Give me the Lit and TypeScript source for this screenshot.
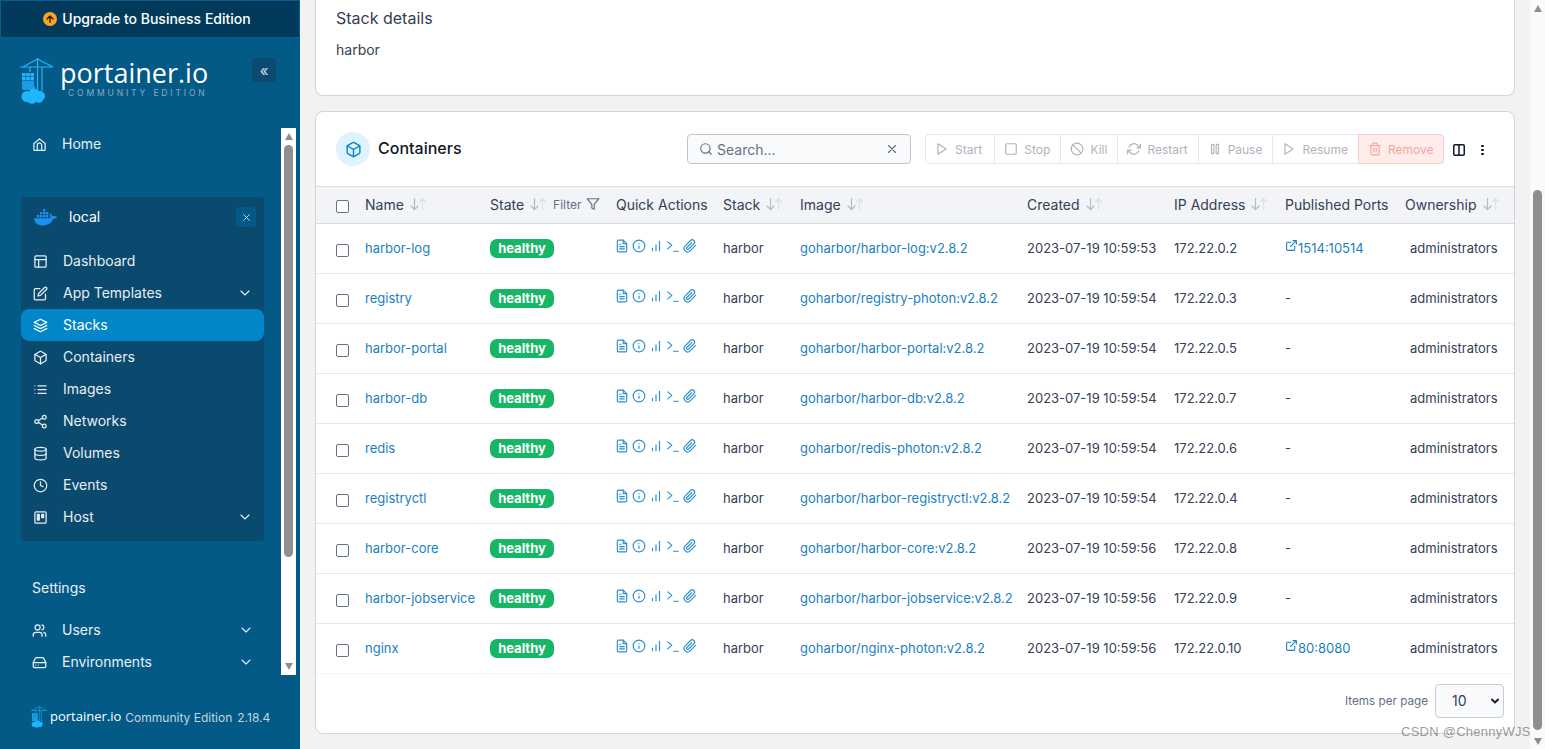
import { LitElement, html, css, svg } from "lit";
import { customElement } from "lit/decorators.js";

const ic = (body: unknown, size = 16, cls = "") => html`<svg class=${cls} width=${size} height=${size} viewBox="0 0 24 24" fill="none" stroke="currentColor" stroke-width="2" stroke-linecap="round" stroke-linejoin="round">${body}</svg>`;

const I = {
  home: svg`<path d="M3 10.500 12 3l9 7.500V20a1.500 1.500 0 0 1-1.500 1.500h-15A1.500 1.500 0 0 1 3 20z"/><path d="M8.500 21.500V13a3.500 3.500 0 0 1 7 0v8.500"/>`,
  layout: svg`<rect x="3" y="3" width="18" height="18" rx="2"/><path d="M3 9h18M9 21V9"/>`,
  edit: svg`<path d="M11 4H4a2 2 0 0 0-2 2v14a2 2 0 0 0 2 2h14a2 2 0 0 0 2-2v-7"/><path d="M18.500 2.500a2.120 2.120 0 0 1 3 3L12 15l-4 1 1-4z"/>`,
  layers: svg`<path d="M12 2 2 7l10 5 10-5z"/><path d="m2 17 10 5 10-5M2 12l10 5 10-5"/>`,
  box: svg`<path d="M21 16V8a2 2 0 0 0-1-1.730l-7-4a2 2 0 0 0-2 0l-7 4A2 2 0 0 0 3 8v8a2 2 0 0 0 1 1.730l7 4a2 2 0 0 0 2 0l7-4A2 2 0 0 0 21 16z"/><path d="M3.300 7 12 12l8.700-5M12 22V12"/>`,
  list: svg`<path d="M8 6h13M8 12h13M8 18h13M3 6h.01M3 12h.01M3 18h.01"/>`,
  share: svg`<circle cx="18" cy="5" r="3"/><circle cx="6" cy="12" r="3"/><circle cx="18" cy="19" r="3"/><path d="m8.600 13.500 6.800 4M15.400 6.500l-6.800 4"/>`,
  db: svg`<ellipse cx="12" cy="5" rx="9" ry="3"/><path d="M21 12c0 1.660-4 3-9 3s-9-1.340-9-3"/><path d="M3 5v14c0 1.660 4 3 9 3s9-1.340 9-3V5"/>`,
  clock: svg`<circle cx="12" cy="12" r="10"/><path d="M12 6v6l4 2"/>`,
  host: svg`<rect x="3" y="3" width="18" height="18" rx="2"/><path d="M7 7h3v9H7zM14 7h3v5h-3z" fill="currentColor"/>`,
  users: svg`<path d="M16 21v-2a4 4 0 0 0-4-4H6a4 4 0 0 0-4 4v2"/><circle cx="9" cy="7" r="4"/><path d="M22 21v-2a4 4 0 0 0-3-3.870M16 3.130a4 4 0 0 1 0 7.750"/>`,
  drive: svg`<path d="M22 12H2"/><path d="M5.450 5.110 2 12v6a2 2 0 0 0 2 2h16a2 2 0 0 0 2-2v-6l-3.450-6.890A2 2 0 0 0 16.760 4H7.240a2 2 0 0 0-1.790 1.110z"/><path d="M6 16h.01M10 16h.01"/>`,
  chev: svg`<path d="m6 9 6 6 6-6"/>`,
  x: svg`<path d="M18 6 6 18M6 6l12 12"/>`,
  search: svg`<circle cx="11" cy="11" r="8"/><path d="m21 21-4.350-4.350"/>`,
  play: svg`<path d="m5 3 14 9-14 9z"/>`,
  square: svg`<rect x="3" y="3" width="18" height="18" rx="2"/>`,
  slash: svg`<circle cx="12" cy="12" r="10"/><path d="m4.900 4.900 14.200 14.200"/>`,
  refresh: svg`<path d="M23 4v6h-6M1 20v-6h6"/><path d="M3.500 9a9 9 0 0 1 14.900-3.400L23 10M1 14l4.600 4.400A9 9 0 0 0 20.500 15"/>`,
  pause: svg`<rect x="6" y="4" width="4" height="16" rx="1"/><rect x="14" y="4" width="4" height="16" rx="1"/>`,
  trash: svg`<path d="M3 6h18M19 6v14a2 2 0 0 1-2 2H7a2 2 0 0 1-2-2V6M8 6V4a2 2 0 0 1 2-2h4a2 2 0 0 1 2 2v2M10 11v6M14 11v6"/>`,
  columns: svg`<rect x="3" y="3" width="18" height="18" rx="2"/><path d="M12 3v18"/>`,
  file: svg`<path d="M14 2H6a2 2 0 0 0-2 2v16a2 2 0 0 0 2 2h12a2 2 0 0 0 2-2V8z"/><path d="M14 2v6h6"/><path d="M8 13h8M8 17h8M8 9h2"/>`,
  info: svg`<circle cx="12" cy="12" r="10"/><path d="M12 16v-4M12 8h.01"/>`,
  bars: svg`<path d="M18 20V4M12 20V10M6 20v-4"/>`,
  term: svg`<path d="m3 5 7 6-7 6M13 21h8"/>`,
  clip: svg`<path d="m21.440 11.050-9.190 9.190a6 6 0 0 1-8.490-8.490l9.190-9.190a4 4 0 0 1 5.660 5.660l-9.200 9.190a2 2 0 0 1-2.830-2.830l8.490-8.480"/>`,
  ext: svg`<path d="M18 13v6a2 2 0 0 1-2 2H5a2 2 0 0 1-2-2V8a2 2 0 0 1 2-2h6M15 3h6v6M10 14 21 3"/>`,
  filter: svg`<path d="M22 3H2l8 9.460V19l4 2v-8.540z"/>`,
};

const logo = (w: number, h: number) => html`<svg width=${w} height=${h} viewBox="0 0 34 46" fill="none">
  <g stroke="#1FB6FF" stroke-width="1.200">
    <path d="M0 9h33M17.500 1 3 9M17.500 1 33 9M17.500 0v32M22 9v24M10 9v5"/>
  </g>
  <g fill="#1FB6FF">
    <rect x="2" y="15" width="3.600" height="3.400"/><rect x="6.200" y="15" width="3.600" height="3.400"/><rect x="10.400" y="15" width="3.600" height="3.400"/>
    <rect x="2" y="19" width="3.600" height="3.400"/><rect x="6.200" y="19" width="3.600" height="3.400"/><rect x="10.400" y="19" width="3.600" height="3.400"/>
    <rect x="2" y="23" width="12" height="4.500" opacity=".75"/>
    <rect x="2" y="27" width="13" height="5" rx="2" opacity=".75"/>
    <circle cx="7" cy="38.500" r="5.500"/><circle cx="14" cy="36" r="5.500"/><circle cx="20" cy="38" r="5"/><circle cx="12" cy="41" r="4.800"/><circle cx="19" cy="41" r="3.800"/>
  </g>
</svg>`;

const whale = html`<svg width="24" height="17" viewBox="0 0 24 17"><g fill="#1c90ed">
  <rect x="3" y="6" width="2.400" height="2.400"/><rect x="6" y="6" width="2.400" height="2.400"/><rect x="9" y="6" width="2.400" height="2.400"/><rect x="12" y="6" width="2.400" height="2.400"/><rect x="6" y="3" width="2.400" height="2.400"/><rect x="9" y="3" width="2.400" height="2.400"/><rect x="12" y="3" width="2.400" height="2.400"/><rect x="9" y="0" width="2.400" height="2.400"/>
  <path d="M0 9.200h16.200c.4-1.600 0-3-.8-4l1-.8c1 .7 1.700 1.700 1.900 2.900 1.300-.5 3-.5 4.700.4-.7 1.500-2.200 2.200-3.700 2.100C17.300 14.500 13.800 16.500 8.800 16.500 3.500 16.500.5 13.700 0 9.200z"/>
</g></svg>`;

type NavItem = { icon: unknown; label: string; chev?: boolean; active?: boolean };
const envItems: NavItem[] = [
  { icon: I.layout, label: "Dashboard" },
  { icon: I.edit, label: "App Templates", chev: true },
  { icon: I.layers, label: "Stacks", active: true },
  { icon: I.box, label: "Containers" },
  { icon: I.list, label: "Images" },
  { icon: I.share, label: "Networks" },
  { icon: I.db, label: "Volumes" },
  { icon: I.clock, label: "Events" },
  { icon: I.host, label: "Host", chev: true },
];

const rows = [
  ["harbor-log", "goharbor/harbor-log:v2.8.2", "2023-07-19 10:59:53", "172.22.0.2", "1514:10514"],
  ["registry", "goharbor/registry-photon:v2.8.2", "2023-07-19 10:59:54", "172.22.0.3", ""],
  ["harbor-portal", "goharbor/harbor-portal:v2.8.2", "2023-07-19 10:59:54", "172.22.0.5", ""],
  ["harbor-db", "goharbor/harbor-db:v2.8.2", "2023-07-19 10:59:54", "172.22.0.7", ""],
  ["redis", "goharbor/redis-photon:v2.8.2", "2023-07-19 10:59:54", "172.22.0.6", ""],
  ["registryctl", "goharbor/harbor-registryctl:v2.8.2", "2023-07-19 10:59:54", "172.22.0.4", ""],
  ["harbor-core", "goharbor/harbor-core:v2.8.2", "2023-07-19 10:59:56", "172.22.0.8", ""],
  ["harbor-jobservice", "goharbor/harbor-jobservice:v2.8.2", "2023-07-19 10:59:56", "172.22.0.9", ""],
  ["nginx", "goharbor/nginx-photon:v2.8.2", "2023-07-19 10:59:56", "172.22.0.10", "80:8080"],
];

const actions: [unknown, string][] = [
  [I.play, "Start"], [I.square, "Stop"], [I.slash, "Kill"], [I.refresh, "Restart"], [I.pause, "Pause"], [I.play, "Resume"],
];

const sort = html`<span class="sort"><svg width="20" height="14" viewBox="0 0 20 14" fill="none" stroke="currentColor" stroke-width="1.200" stroke-linecap="round" stroke-linejoin="round"><path d="M5.500 1.500v11M2 9l3.500 3.500L9 9"/><path d="M13.500 12.500v-11M10.500 5l3-3.500 3 3.500" stroke="#dde0e5"/></svg></span>`;

@customElement("app-root")
export class AppRoot extends LitElement {
  static styles = css`
    :host { display: block; height: 749px; width: 1545px; overflow: hidden; font-family: Inter, "Noto Sans", sans-serif; font-size: 14px; color: #344054; }
    * { box-sizing: border-box; }
    svg { display: block; flex: none; }
    .page { display: flex; height: 749px; position: relative; background: #f2f2f2; }

    .side { width: 300px; flex: none; background: #045a87; color: #f2f4f7; display: flex; flex-direction: column; }
    .upgrade { height: 38px; background: #023a5b; border: 1px solid #0a5f90; display: flex; align-items: center; justify-content: center; gap: 5px; color: #fff; font-weight: 500; font-size: 14px; padding: 0 6px 1px 0; }
    .upgrade .dot { width: 14px; height: 14px; border-radius: 50%; background: #f8a520; color: #2b1d05; display: flex; align-items: center; justify-content: center; }
    .brand { height: 90px; display: flex; padding: 20px 24px 0 20px; justify-content: space-between; align-items: flex-start; }
    .brand-l { display: flex; gap: 6px; }
    .brand-t { display: flex; flex-direction: column; padding-top: 3px; }
    .wordmark { font-family: "Open Sans", Inter, sans-serif; font-size: 27px; line-height: 24px; color: #fff; font-weight: 500; }
    .comm { font-size: 8.500px; line-height: 10px; letter-spacing: 2.850px; color: #8da9bc; padding-left: 8px; margin-top: 3px; }
    .collapse { width: 24px; height: 24px; border-radius: 4px; background: #0b4b70; color: #cfe0ea; display: flex; align-items: center; justify-content: center; font-size: 15px; }
    .mid { display: flex; height: 547px; }
    .nav { width: 281px; flex: none; }
    .item { display: flex; align-items: center; height: 32px; color: #eaf0f4; }
    .lbl { padding-bottom: 2px; }
    .top { padding-left: 32px; }
    .top .lbl { margin-left: 15px; }
    .group { margin: 37px 17px 0 21px; background: #0a4a6e; border-radius: 4px; padding-bottom: 8px; }
    .ghead { height: 40px; display: flex; align-items: center; padding: 0 8px 0 13px; color: #fff; }
    .ghead .lbl { margin-left: 11px; flex: 1; }
    .gx { width: 20px; height: 20px; border-radius: 3px; background: #045a87; display: flex; align-items: center; justify-content: center; color: #dbe6ee; }
    .gitems { padding-top: 8px; }
    .gitem { padding: 0 11px 0 12px; height: 32px; display: flex; align-items: center; border-radius: 8px; color: #e8eef3; }
    .gitem .lbl { margin-left: 15px; flex: 1; }
    .gitem.on { background: #0086c9; color: #fff; }
    .chev { stroke-width: 1.600; }
    .settings { padding: 38px 0 0 32px; line-height: 17px; color: #eaf0f4; }
    .sitems { padding: 18px 27px 0 32px; }
    .sitems .item .lbl { margin-left: 15px; flex: 1; }
    .sbar { width: 15px; flex: none; background: #fff; display: flex; flex-direction: column; align-items: center; padding: 5px 0; }
    .thumb { width: 9px; background: #8f8f8f; border-radius: 5px; display: block; }
    .tri-u { width: 0; height: 0; border: 4.500px solid transparent; border-top: 0; border-bottom: 7px solid #8f8f8f; display: block; }
    .tri-d { width: 0; height: 0; border: 4.500px solid transparent; border-bottom: 0; border-top: 7px solid #8f8f8f; display: block; }
    .foot { display: flex; align-items: center; padding: 31px 0 0 31px; }
    .foot .wm { font-family: "Open Sans", Inter, sans-serif; font-size: 13px; color: #fff; font-weight: 500; margin-left: 3px; padding-bottom: 2px; }
    .foot .ed { font-size: 12px; color: #c5d5df; margin-left: 4px; }
    .foot .ver { font-size: 12px; color: #c5d5df; margin-left: 5px; }

    .main { flex: 1; min-width: 0; padding: 0 15px; display: flex; flex-direction: column; gap: 15px; }
    .card { background: #fff; border: 1px solid #d0d5dd; border-radius: 8px; }
    .details { height: 97px; flex: none; margin-top: -1px; border-top: 0; border-top-left-radius: 0; border-top-right-radius: 0; padding: 10px 20px; }
    .details h3 { margin: 0 0 13px; font-size: 16px; font-weight: 400; line-height: 19px; color: #344054; }
    .details p { margin: 0; line-height: 17px; color: #344054; }
    .cont { height: 623px; flex: none; display: flex; flex-direction: column; }
    .tools { height: 74px; flex: none; display: flex; align-items: center; padding: 0 20px; }
    .t-ic { width: 34px; height: 34px; border-radius: 50%; background: #e0f2fe; color: #0086c9; display: flex; align-items: center; justify-content: center; }
    .t-title { font-size: 16px; font-weight: 500; color: #101828; margin-left: 8px; width: 309px; line-height: 20px; margin-top: -3px; }
    .search { width: 224px; height: 30px; border: 1px solid #bfc4cc; border-radius: 4px; background: #f9fafb; display: flex; align-items: center; padding: 0 11px; color: #667085; }
    .search span { flex: 1; margin-left: 4px; }
    .btns { display: flex; margin-left: 14px; height: 30px; border: 1px solid #e4e7ec; border-radius: 4px; }
    .btn { display: flex; align-items: center; gap: 6px; padding: 0 10px 0 9px; font-size: 12px; color: #aeb4bd; border-right: 1px solid #e4e7ec; }
    .btn:first-child { padding-right: 12.300px; }
    .btn svg { color: #aeb4bd; }
    .btn:last-child { border-right: 0; }
    .btn.danger { background: #feeceb; color: #f2a6a0; border: 1px solid #fbcfcb; margin: -1px; border-radius: 0 4px 4px 0; }
    .btn.danger svg { color: #f2a6a0; }
    .t-end { display: flex; align-items: center; margin: 2px 0 0 8px; color: #101828; gap: 15px; }
    .cols { stroke-width: 2.600; }
    .dots { display: flex; flex-direction: column; gap: 1.500px; width: 3px; }
    .dots i { width: 2.500px; height: 2.500px; border-radius: 50%; background: #101828; display: block; }

    table { border-collapse: collapse; table-layout: fixed; width: 100%; }
    th { height: 37px; background: #f2f4f7; font-weight: 400; text-align: left; padding: 0 0 2px; border-top: 1px solid #d8dbe0; border-bottom: 1px solid #d8dbe0; color: #344054; white-space: nowrap; font-size: 14px; }
    th:first-child { padding: 3px 0 0; }
    td { height: 50px; padding: 0 0 2px; border-bottom: 1px solid #e4e7ec; white-space: nowrap; font-size: 13px; color: #344054; }
    td:first-child { padding: 4px 0 0; }
    tr:last-child td { border-bottom: 1px solid #f2f4f7; }
    td.own { padding-left: 5px; }
    .cbx { appearance: none; display: block; width: 13px; height: 13px; border: 1px solid #667085; border-radius: 2px; margin: 0 0 0 20px; background: #fff; }
    .th-in { display: flex; align-items: center; gap: 5px; }
    .sort { color: #b5bac3; }
    .filter { display: flex; align-items: center; gap: 4px; font-size: 12px; color: #667085; margin-left: -1px; }
    a { color: #1a7fc1; text-decoration: none; }
    .badge { display: block; width: 64px; margin-top: 2px; text-align: center; background: #17b566; color: #fff; font-weight: 700; font-size: 13px; line-height: 18px; height: 19px; border-radius: 7px; }
    .qa { display: flex; align-items: center; gap: 3px; color: #2b8fd0; margin: -3px 0 0 -1px; }
    .port { display: inline-flex; align-items: center; color: #1a7fc1; }
    .port svg { margin-top: -4px; }
    .tfoot { flex: 1; display: flex; align-items: center; justify-content: flex-end; padding: 0 10px 6px 0; font-size: 11.700px; color: #667085; gap: 7px; }
    .sel { width: 69px; height: 34px; border: 1px solid #c9ced6; border-radius: 4px; background: #f9fafb; display: flex; align-items: center; justify-content: space-between; font-size: 14px; padding: 0 2px 0 16px; color: #344054; }
    .selc { stroke-width: 4; color: #222; }

    .vbar { width: 15px; flex: none; background: #fafafa; display: flex; flex-direction: column; align-items: center; padding-top: 5px; }
    .vbar .tri-u { margin-bottom: 178px; }
    .vbar .thumb { width: 9px; height: 540px; margin-bottom: 8px; }
    .water { position: absolute; left: 1401px; top: 724px; font: 13px "Liberation Sans", Arial, sans-serif; color: rgba(90, 90, 90, .62); letter-spacing: .25px; pointer-events: none; }
  `;

  renderGroup() {
    return envItems.map(i => html`<div class="gitem ${i.active ? "on" : ""}">${ic(i.icon, 15)}<span class="lbl">${i.label}</span>${i.chev ? ic(I.chev, 16, "chev") : ""}</div>`);
  }

  renderRow(r: string[]) {
    return html`<tr>
      <td><input class="cbx" type="checkbox" /></td>
      <td><a>${r[0]}</a></td>
      <td><span class="badge">healthy</span></td>
      <td><div class="qa">${ic(I.file, 14)}${ic(I.info, 14)}${ic(I.bars, 14)}${ic(I.term, 14)}${ic(I.clip, 14)}</div></td>
      <td>harbor</td>
      <td><a>${r[1]}</a></td>
      <td>${r[2]}</td>
      <td>${r[3]}</td>
      <td>${r[4] ? html`<a class="port">${ic(I.ext, 13)}${r[4]}</a>` : "-"}</td>
      <td class="own">administrators</td>
    </tr>`;
  }

  render() {
    return html`<div class="page">
      <aside class="side">
        <div class="upgrade"><span class="dot"><svg width="10" height="10" viewBox="0 0 24 24" fill="none" stroke="currentColor" stroke-width="3.500" stroke-linecap="round" stroke-linejoin="round"><path d="M12 20V5M5 12l7-7 7 7"/></svg></span>Upgrade to Business Edition</div>
        <div class="brand">
          <div class="brand-l">${logo(34, 46)}<div class="brand-t"><span class="wordmark">portainer.io</span><span class="comm">COMMUNITY EDITION</span></div></div>
          <div class="collapse">«</div>
        </div>
        <div class="mid">
          <div class="nav">
            <div class="item top">${ic(I.home, 15)}<span class="lbl">Home</span></div>
            <div class="group">
              <div class="ghead">${whale}<span class="lbl">local</span><span class="gx">${ic(I.x, 11)}</span></div>
              <div class="gitems">${this.renderGroup()}</div>
            </div>
            <div class="settings">Settings</div>
            <div class="sitems">
              <div class="item">${ic(I.users, 15)}<span class="lbl">Users</span>${ic(I.chev, 16, "chev")}</div>
              <div class="item">${ic(I.drive, 15)}<span class="lbl">Environments</span>${ic(I.chev, 16, "chev")}</div>
            </div>
          </div>
          <div class="sbar"><i class="tri-u"></i><i class="thumb" style="height:412px;margin-top:5px"></i><i style="flex:1"></i><i class="tri-d"></i></div>
        </div>
        <div class="foot">${logo(16, 22)}<span class="wm">portainer.io</span><span class="ed">Community Edition</span><span class="ver">2.18.4</span></div>
      </aside>
      <main class="main">
        <section class="card details"><h3>Stack details</h3><p>harbor</p></section>
        <section class="card cont">
          <div class="tools">
            <span class="t-ic">${ic(I.box, 17)}</span>
            <span class="t-title">Containers</span>
            <div class="search">${ic(I.search, 14)}<span>Search...</span>${ic(I.x, 14)}</div>
            <div class="btns">
              ${actions.map(([i, l]) => html`<span class="btn">${ic(i, 14)}${l}</span>`)}
              <span class="btn danger">${ic(I.trash, 14)}Remove</span>
            </div>
            <div class="t-end">${ic(I.columns, 14, "cols")}<span class="dots"><i></i><i></i><i></i></span></div>
          </div>
          <table>
            <colgroup><col style="width:49px"/><col style="width:125px"/><col style="width:126px"/><col style="width:107px"/><col style="width:77px"/><col style="width:227px"/><col style="width:147px"/><col style="width:111px"/><col style="width:120px"/><col/></colgroup>
            <thead><tr>
              <th><input class="cbx" type="checkbox" /></th>
              <th><div class="th-in">Name ${sort}</div></th>
              <th><div class="th-in">State ${sort}<span class="filter">Filter ${ic(I.filter, 14)}</span></div></th>
              <th>Quick Actions</th>
              <th><div class="th-in">Stack ${sort}</div></th>
              <th><div class="th-in">Image ${sort}</div></th>
              <th><div class="th-in">Created ${sort}</div></th>
              <th><div class="th-in">IP Address ${sort}</div></th>
              <th>Published Ports</th>
              <th><div class="th-in">Ownership ${sort}</div></th>
            </tr></thead>
            <tbody>${rows.map(r => this.renderRow(r))}</tbody>
          </table>
          <div class="tfoot">Items per page <span class="sel">10 ${ic(I.chev, 12, "selc")}</span></div>
        </section>
      </main>
      <div class="vbar"><i class="tri-u"></i><i class="thumb"></i><i class="tri-d"></i></div>
      <div class="water">CSDN @ChennyWJS</div>
    </div>`;
  }
}
